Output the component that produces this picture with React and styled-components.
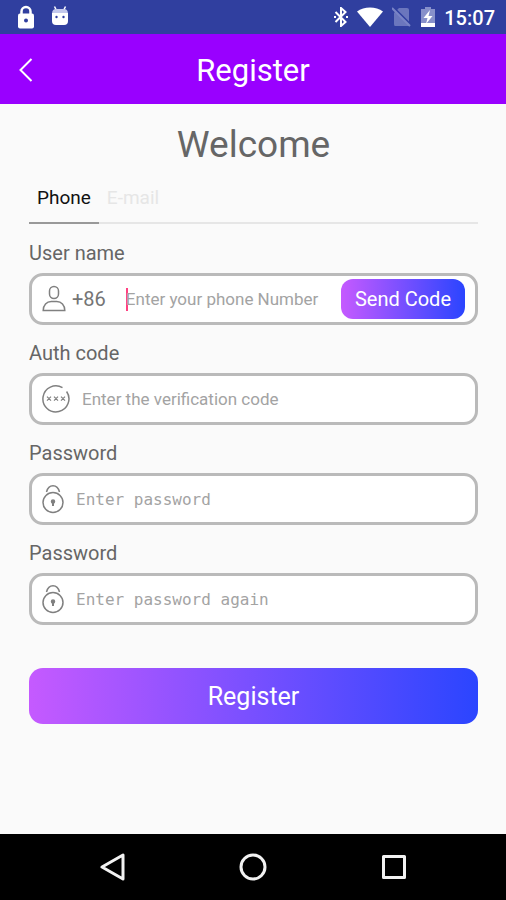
import React, { useState } from "react";
import styled, { createGlobalStyle } from "styled-components";

const GlobalStyle = createGlobalStyle`
  * {
    box-sizing: border-box;
  }

  body {
    margin: 0;
    background-color: #fafafa;
    font-family: Roboto, "Liberation Sans", sans-serif;
  }

  button,
  input {
    font-family: inherit;
  }
`;

const Screen = styled.div`
  display: flex;
  flex-direction: column;
  min-height: 100vh;
`;

const StatusBar = styled.div`
  display: flex;
  justify-content: space-between;
  align-items: center;
  height: 34px;
  padding: 0 11px 0 16px;
  background-color: #303f9f;
  color: white;
`;

const StatusGroup = styled.div`
  display: flex;
  align-items: center;
  gap: ${(props) => props.$gap};
`;

const Clock = styled.span`
  padding-top: 2px;
  font-size: 20px;
  line-height: 24px;
  font-weight: 500;
`;

const Header = styled.header`
  display: grid;
  grid-template-columns: 52px 1fr 52px;
  align-items: center;
  height: 70px;
  background-color: #9900ff;
  color: white;
`;

const BackButton = styled.button`
  display: flex;
  justify-content: center;
  align-items: center;
  height: 70px;
  padding: 2px 0 0;
  border: none;
  background-color: transparent;
  color: inherit;
  cursor: pointer;
`;

const HeaderTitle = styled.h1`
  margin: 0;
  padding-top: 4px;
  text-align: center;
  font-size: 31px;
  line-height: 36px;
  font-weight: 400;
`;

const Main = styled.main`
  flex: 1;
  padding: 19px 28px 24px 29px;
`;

const Welcome = styled.h2`
  margin: 0;
  text-align: center;
  color: #666;
  font-size: 37px;
  line-height: 44px;
  font-weight: 400;
`;

const Tabs = styled.div`
  display: flex;
  margin-top: 3px;
  box-shadow: inset 0 -2px 0 #e6e6e6;
`;

const Tab = styled.button`
  height: 54px;
  padding: 2px 8px 0;
  border: none;
  border-bottom: 2px solid ${(props) => (props.$active ? "#999" : "transparent")};
  background-color: transparent;
  color: ${(props) => (props.$active ? "#111" : "#e6e6e6")};
  font-size: 19px;
  cursor: pointer;
`;

const Form = styled.form`
  display: flex;
  flex-direction: column;
  padding-top: 1px;
`;

const Label = styled.label`
  margin: 16px 0 8px;
  color: #666;
  font-size: 20px;
  line-height: 24px;
`;

const Field = styled.div`
  display: flex;
  align-items: center;
  height: 52px;
  padding: 0 10px;
  border: 3px solid #bababa;
  border-radius: 14px;
  background-color: white;
  color: #757575;
`;

const FieldIcon = styled.svg`
  flex: none;
  fill: none;
  stroke: #808080;
  stroke-width: 1.5;
`;

const Prefix = styled.span`
  margin: 0 20px 0 6px;
  font-size: 20px;
`;

const Caret = styled.span`
  flex: none;
  width: 2px;
  height: 23px;
  margin-right: -2px;
  background-color: #ff4081;
`;

const Input = styled.input`
  flex: 1;
  min-width: 0;
  padding: 0;
  border: none;
  outline: none;
  background-color: transparent;
  color: #444;
  caret-color: #ff4081;
  font-size: 17px;
  margin-left: ${(props) => props.$indent || "0"};

  &::placeholder {
    color: #a3a3a3;
    opacity: 1;
  }
`;

const PasswordInput = styled(Input)`
  font-family: "DejaVu Sans Mono", monospace;
  font-size: 16px;
`;

const GradientButton = styled.button`
  border: none;
  background-image: linear-gradient(to right, #c55aff, #2b45ff);
  color: white;
  cursor: pointer;
`;

const SendButton = styled(GradientButton)`
  flex: none;
  height: 40px;
  margin-left: 8px;
  padding: 0 14px;
  border-radius: 12px;
  font-size: 20px;
`;

const SubmitButton = styled(GradientButton)`
  height: 56px;
  margin-top: 43px;
  border-radius: 14px;
  font-size: 25px;
`;

const NavigationBar = styled.nav`
  display: grid;
  grid-template-columns: repeat(3, 1fr);
  height: 66px;
  padding: 0 42px;
  background-color: black;
`;

const NavButton = styled.button`
  display: flex;
  justify-content: center;
  align-items: center;
  padding: 0;
  border: none;
  background-color: transparent;
  cursor: pointer;

  svg {
    fill: none;
    stroke: #f2f2f2;
    stroke-width: 3;
    stroke-linejoin: round;
  }
`;

const PadlockIcon = () => (
  <FieldIcon width="22" height="30" viewBox="0 0 22 30">
    <circle cx="11" cy="18.5" r="10" />
    <path d="M4.5 8C5.5 4 7.8 1.8 11 1.8S16.5 4 17.5 8" />
    <path d="M11 18v4" strokeWidth="2" />
    <circle cx="11" cy="17.5" r="1.5" fill="#808080" />
  </FieldIcon>
);

const CodeIcon = () => (
  <FieldIcon width="28" height="28" viewBox="0 0 28 28">
    <path d="M20.5 2.7A13 13 0 1 0 24.6 6.500" />
    <path
      d="M5 11.700l4 4m0-4l-4 4M12 11.700l4 4m0-4l-4 4M19 11.700l4 4m0-4l-4 4"
      strokeWidth="1.2"
    />
  </FieldIcon>
);

const UserIcon = () => (
  <FieldIcon width="24" height="28" viewBox="0 0 24 28">
    <rect x="7.5" y="1.5" width="9" height="12" rx="4.5" />
    <path d="M1.2 25.5h21.6c0-5.5-3.5-9-8-9H9.2c-4.5 0-8 3.5-8 9z" />
  </FieldIcon>
);

const App = () => {
  const [tab, setTab] = useState("phone");
  const [phone, setPhone] = useState("");

  return (
    <Screen>
      <GlobalStyle />
      <StatusBar>
        <StatusGroup $gap="15px">
          <svg width="20" height="24" viewBox="0 0 20 24">
            <path d="M5.5 10V6.5a4.5 4.5 0 0 1 9 0V10" fill="none" stroke="white" strokeWidth="2.5" />
            <rect x="2" y="8.500" width="16" height="15" rx="2" fill="white" />
            <circle cx="10" cy="15.5" r="2" fill="#303f9f" />
          </svg>
          <svg width="18" height="24" viewBox="0 0 18 24">
            <path d="M3.5 1.5l2 4M14.5 1.5l-2 4" stroke="white" strokeWidth="1.5" />
            <path d="M1 9q0-5 4-5h8q4 0 4 5z" fill="#c3c8ec" />
            <path d="M1 8h16v8q0 4-4 4H5q-4 0-4-4z" fill="white" />
            <circle cx="5.5" cy="12" r="1.2" fill="#303f9f" />
            <circle cx="12.5" cy="12" r="1.2" fill="#303f9f" />
          </svg>
        </StatusGroup>
        <StatusGroup $gap="9px">
          <svg width="14" height="20" viewBox="0 0 14 20">
            <path d="M1.5 5l10 10L7 19V1l4.5 4-10 10" fill="none" stroke="white" strokeWidth="2" />
            <path d="M0 10h2M12 10h2" stroke="white" strokeWidth="2" />
          </svg>
          <svg width="26" height="20" viewBox="0 0 26 20">
            <path d="M13 20L0 4.5C7-1 19-1 26 4.5z" fill="white" />
          </svg>
          <svg width="20" height="20" viewBox="0 0 20 20">
            <path d="M7 1h8q2 0 2 2v16H3q-1 0-1-2V6z" fill="#6b76bd" />
            <path d="M2 1l18 18" stroke="#303f9f" strokeWidth="2" />
            <path d="M0 1l18 18" stroke="#7a84c6" strokeWidth="2" />
          </svg>
          <svg width="14" height="20" viewBox="0 0 14 20">
            <path d="M4 0h6v2h4v18H0V2h4z" fill="#8790ca" />
            <path d="M0 16h14v4H0z" fill="white" />
            <path d="M9 3L2.500 11h4L5 17l6.500-8h-4z" fill="white" />
          </svg>
          <Clock>15:07</Clock>
        </StatusGroup>
      </StatusBar>

      <Header>
        <BackButton type="button" aria-label="Back">
          <svg width="14" height="24" viewBox="0 0 14 24">
            <path d="M12.5 1L1.5 12l11 11" fill="none" stroke="white" strokeWidth="2" />
          </svg>
        </BackButton>
        <HeaderTitle>Register</HeaderTitle>
      </Header>

      <Main>
        <Welcome>Welcome</Welcome>
        <Tabs role="tablist">
          <Tab
            type="button"
            role="tab"
            aria-selected={tab === "phone"}
            $active={tab === "phone"}
            onClick={() => setTab("phone")}
          >
            Phone
          </Tab>
          <Tab
            type="button"
            role="tab"
            aria-selected={tab === "email"}
            $active={tab === "email"}
            onClick={() => setTab("email")}
          >
            E-mail
          </Tab>
        </Tabs>

        <Form onSubmit={(e) => e.preventDefault()}>
          <Label htmlFor="phone">User name</Label>
          <Field>
            <UserIcon />
            <Prefix>+86</Prefix>
            {phone === "" && <Caret />}
            <Input
              id="phone"
              type="tel"
              placeholder="Enter your phone Number"
              value={phone}
              onChange={(e) => setPhone(e.target.value)}
            />
            <SendButton type="button">Send Code</SendButton>
          </Field>

          <Label htmlFor="code">Auth code</Label>
          <Field>
            <CodeIcon />
            <Input id="code" type="text" $indent="12px" placeholder="Enter the verification code" />
          </Field>

          <Label htmlFor="password">Password</Label>
          <Field>
            <PadlockIcon />
            <PasswordInput
              id="password"
              type="password"
              $indent="12px"
              placeholder="Enter password"
            />
          </Field>

          <Label htmlFor="password-again">Password</Label>
          <Field>
            <PadlockIcon />
            <PasswordInput
              id="password-again"
              type="password"
              $indent="12px"
              placeholder="Enter password again"
            />
          </Field>

          <SubmitButton type="submit">Register</SubmitButton>
        </Form>
      </Main>

      <NavigationBar>
        <NavButton type="button" aria-label="Back">
          <svg width="26" height="28" viewBox="0 0 26 28">
            <path d="M24 2v24L3 14z" />
          </svg>
        </NavButton>
        <NavButton type="button" aria-label="Home">
          <svg width="28" height="28" viewBox="0 0 28 28">
            <circle cx="14" cy="14" r="12" />
          </svg>
        </NavButton>
        <NavButton type="button" aria-label="Recent apps">
          <svg width="26" height="26" viewBox="0 0 26 26">
            <rect x="2.5" y="2.5" width="21" height="21" />
          </svg>
        </NavButton>
      </NavigationBar>
    </Screen>
  );
};

export default App;
